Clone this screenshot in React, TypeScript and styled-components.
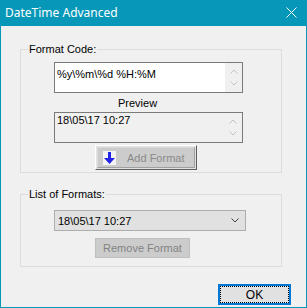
import React from "react";
import styled, { createGlobalStyle } from "styled-components";

const ACCENT = "#0797b9";

const GlobalStyle = createGlobalStyle`
  html, body { margin: 0; padding: 0; background: #ffffff; }
  body {
    font-family: "Liberation Sans", Arial, sans-serif;
    font-size: 11px;
    color: #000;
  }
  * { box-sizing: border-box; }
`;

const Window = styled.div`
  width: 307px;
  height: 308px;
  display: flex;
  flex-direction: column;
`;

const TitleBar = styled.div`
  height: 26px;
  flex: none;
  background: ${ACCENT};
  color: #ffffff;
  display: flex;
  align-items: center;
  justify-content: space-between;
  padding: 0 10px 1px 5px;
  font-family: "Noto Sans", "Open Sans", sans-serif;
  font-size: 12px;
`;

const Body = styled.div`
  flex: 1;
  background: #f0f0f0;
  border: 1px solid ${ACCENT};
  border-top: none;
  display: flex;
  flex-direction: column;
  padding: 17px 15px 0 19px;
`;

const Group = styled.fieldset<{ $top?: number }>`
  margin: ${(p) => p.$top ?? 0}px 9px 0 0;
  padding: 0;
  min-width: 0;
  border: 1px solid #dcdcdc;
`;

const Legend = styled.legend`
  margin-left: 7px;
  padding: 0 1px;
  font-size: 11px;
  line-height: 13px;
`;

const GroupContent = styled.div<{ $pt: number; $pb: number }>`
  display: flex;
  flex-direction: column;
  align-items: flex-start;
  padding: ${(p) => p.$pt}px 0 ${(p) => p.$pb}px 33px;
`;

const Edit = styled.div<{ $readOnly?: boolean; $textTop: number; $mt?: number }>`
  width: 189px;
  height: 31px;
  margin-top: ${(p) => p.$mt ?? 0}px;
  border: 1px solid #7a7a7a;
  background: ${(p) => (p.$readOnly ? "#f0f0f0" : "#ffffff")};
  display: flex;
`;

const EditText = styled.div<{ $textTop: number }>`
  flex: 1;
  padding: ${(p) => p.$textTop}px 0 0 2px;
  line-height: 13px;
  white-space: pre;
`;

const Spin = styled.div<{ $w: number }>`
  width: ${(p) => p.$w}px;
  background: #f0f0f0;
  display: flex;
  flex-direction: column;
  align-items: center;
  justify-content: space-around;
  padding: 2px 0;
`;

const Label = styled.div<{ $ml: number; $mt: number }>`
  margin: ${(p) => p.$mt}px 0 0 ${(p) => p.$ml}px;
  line-height: 13px;
`;

const BitmapButton = styled.div`
  margin: 2px 0 0 41px;
  width: 102px;
  height: 25px;
  border-style: solid;
  border-width: 1px;
  border-color: #ffffff #5f5f5f #5f5f5f #ffffff;
  padding: 1px;
  background: #e3e3e3;
  display: flex;
`;

const ButtonFace = styled.div`
  flex: 1;
  background: #cccccc;
  border-style: solid;
  border-width: 1px;
  border-color: #d9d9d9 #a0a0a0 #a0a0a0 #d9d9d9;
  display: flex;
  align-items: center;
  padding-left: 5px;
  color: #8a8a8a;
`;

const IconBox = styled.div`
  width: 13px;
  height: 14px;
  background: #f4f4f4;
  display: flex;
  align-items: center;
  justify-content: center;
  margin-right: 11px;
`;

const Combo = styled.div`
  margin-top: 9px;
  width: 192px;
  height: 21px;
  border: 1px solid #adadad;
  background: #e1e1e1;
  display: flex;
  align-items: center;
  justify-content: space-between;
  padding: 0 6px 0 3px;
`;

const FlatButton = styled.div`
  margin: 7px 0 0 41px;
  width: 95px;
  height: 20px;
  border: 1px solid #bfbfbf;
  background: #cccccc;
  color: #838383;
  display: flex;
  align-items: center;
  justify-content: center;
`;

const Footer = styled.div`
  display: flex;
  justify-content: flex-end;
  margin-top: 17px;
`;

const OkButton = styled.div`
  width: 73px;
  height: 21px;
  border: 2px solid #0078d7;
  background: #e1e1e1;
  padding: 0;
  display: flex;
`;

const FocusRect = styled.div`
  flex: 1;
  margin: 0;
  border: 1px dotted #000000;
  display: flex;
  align-items: center;
  justify-content: center;
  font-size: 12px;
`;

const Chevron = ({ up, color }: { up?: boolean; color: string }) => (
  <svg width="8" height="5" viewBox="0 0 8 5">
    <polyline
      points={up ? "0.5,4.5 4,1 7.5,4.5" : "0.5,0.5 4,4 7.5,0.5"}
      fill="none"
      stroke={color}
      strokeWidth="1"
    />
  </svg>
);

const CloseIcon = () => (
  <svg width="11" height="11" viewBox="0 0 11 11">
    <path d="M0.5 0.5 L10.5 10.5 M10.5 0.5 L0.5 10.5" stroke="#ffffff" strokeWidth="1" />
  </svg>
);

const DownArrow = () => (
  <svg width="11" height="12" viewBox="0 0 11 12">
    <rect x="4" y="0" width="3" height="6" fill="#2424e8" />
    <polygon points="0,6 11,6 5.5,12" fill="#2424e8" />
  </svg>
);

export default function App() {
  return (
    <>
      <GlobalStyle />
      <Window>
        <TitleBar>
          <span>DateTime Advanced</span>
          <CloseIcon />
        </TitleBar>
        <Body>
          <Group>
            <Legend>Format Code:</Legend>
            <GroupContent $pt={6} $pb={2}>
              <Edit $textTop={5}>
                <EditText $textTop={5}>%y\%m\%d %H:%M</EditText>
                <Spin $w={17}>
                  <Chevron up color="#c3c3c3" />
                  <Chevron color="#c3c3c3" />
                </Spin>
              </Edit>
              <Label $ml={64} $mt={4}>Preview</Label>
              <Edit $readOnly $textTop={1} $mt={2}>
                <EditText $textTop={1}>18\05\17 10:27</EditText>
                <Spin $w={18}>
                  <Chevron up color="#c3c3c3" />
                  <Chevron color="#c3c3c3" />
                </Spin>
              </Edit>
              <BitmapButton>
                <ButtonFace>
                  <IconBox>
                    <DownArrow />
                  </IconBox>
                  Add Format
                </ButtonFace>
              </BitmapButton>
            </GroupContent>
          </Group>
          <Group $top={15}>
            <Legend>List of Formats:</Legend>
            <GroupContent $pt={0} $pb={8}>
              <Combo>
                <span>18\05\17 10:27</span>
                <Chevron color="#404040" />
              </Combo>
              <FlatButton>Remove Format</FlatButton>
            </GroupContent>
          </Group>
          <Footer>
            <OkButton>
              <FocusRect>OK</FocusRect>
            </OkButton>
          </Footer>
        </Body>
      </Window>
    </>
  );
}
